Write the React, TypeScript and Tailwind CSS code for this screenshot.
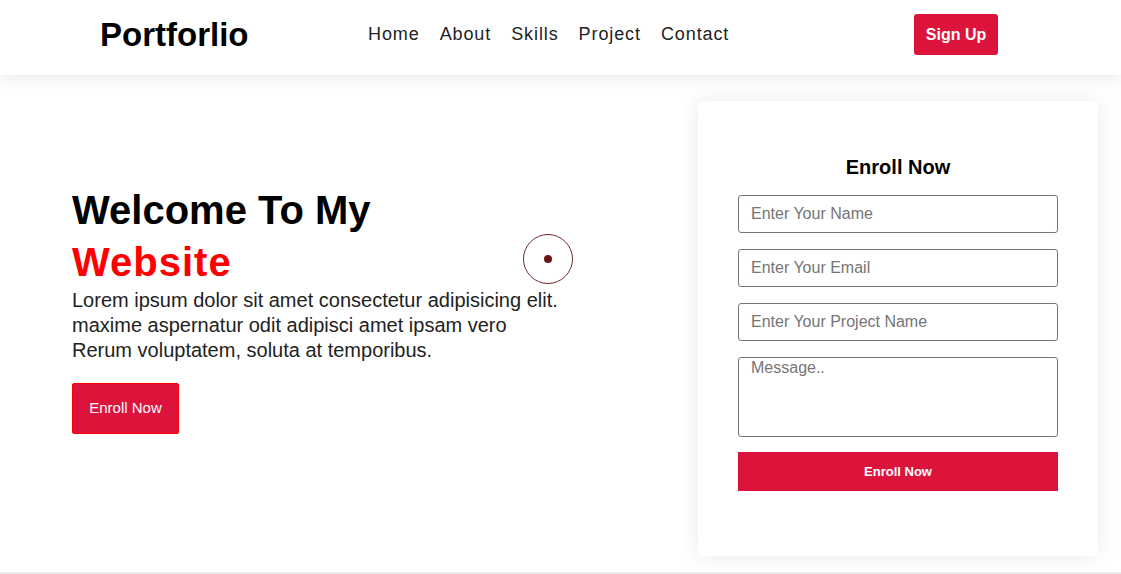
import React from "react";

export default function App() {
  const font = { fontFamily: '"Liberation Sans", Arial, sans-serif' };
  return (
    <div className="relative w-full min-h-[574px] bg-white overflow-hidden" style={font}>
      <header className="relative z-10 h-[75px] bg-white shadow-[0_4px_14px_rgba(0,0,0,0.08)] flex items-center pb-[6px]">
        <div className="pl-[100px] w-[368px] text-[33px] font-bold text-black leading-none">Portforlio</div>
        <nav className="w-[546px] flex items-center gap-[20px] text-[18px] tracking-[0.9px] text-[#222]">
          <a>Home</a>
          <a>About</a>
          <a>Skills</a>
          <a>Project</a>
          <a>Contact</a>
        </nav>
        <div>
          <button className="h-[41px] w-[84px] rounded-[3px] bg-[#dc143c] text-white text-[16px] font-bold">
            Sign Up
          </button>
        </div>
      </header>

      <main className="flex h-[497px] bg-white">
        <div className="flex-1 pl-[72px] pt-[109px]">
          <h1 className="text-[40px] leading-[52px] font-bold text-black">
            Welcome To My
            <br />
            <span className="text-[#ff0000] tracking-[1px]">Website</span>
          </h1>
          <p className="text-[20px] leading-[25px] text-[#222]">
            Lorem ipsum dolor sit amet consectetur adipisicing elit.
            <br />
            maxime aspernatur odit adipisci amet ipsam vero
            <br />
            Rerum voluptatem, soluta at temporibus.
          </p>
          <button className="mt-[20px] h-[51px] w-[107px] rounded-[2px] border border-[#ff0000] bg-[#dc143c] text-white text-[15px]">
            Enroll Now
          </button>
        </div>

        <div className="mt-[26px] mr-[23px] w-[400px] h-[455px] rounded-[5px] bg-white shadow-[0_0_22px_rgba(0,0,0,0.09)] px-[40px]">
          <div className="pt-[55px]">
            <h2 className="text-center text-[20px] font-bold text-black leading-[23px]">Enroll Now</h2>
            <form className="mt-[16px] flex flex-col gap-[16px]">
              <input
                placeholder="Enter Your Name"
                className="h-[38px] w-[320px] rounded-[3px] border border-[#767676] pl-[12px] text-[16px] placeholder:text-[#757575] outline-none"
              />
              <input
                placeholder="Enter Your Email"
                className="h-[38px] w-[320px] rounded-[3px] border border-[#767676] pl-[12px] text-[16px] placeholder:text-[#757575] outline-none"
              />
              <input
                placeholder="Enter Your Project Name"
                className="h-[38px] w-[320px] rounded-[3px] border border-[#767676] pl-[12px] text-[16px] placeholder:text-[#757575] outline-none"
              />
              <textarea
                placeholder="Message.."
                className="h-[80px] w-[320px] resize-none rounded-[3px] border border-[#767676] pl-[12px] pt-0 text-[16px] leading-[20px] placeholder:text-[#757575] outline-none"
              />
              <button
                type="button"
                className="mt-[-1px] h-[39px] w-[320px] bg-[#dc143c] text-white text-[13px] font-bold"
              >
                Enroll Now
              </button>
            </form>
          </div>
        </div>
      </main>
      <div className="h-[20px] bg-[#eeeeee]" />

      <div className="absolute left-[523px] top-[234px] h-[50px] w-[50px] rounded-full border border-[#6b2a2a] flex items-center justify-center">
        <div className="h-[8px] w-[8px] rounded-full bg-[#6b1414]" />
      </div>
    </div>
  );
}
